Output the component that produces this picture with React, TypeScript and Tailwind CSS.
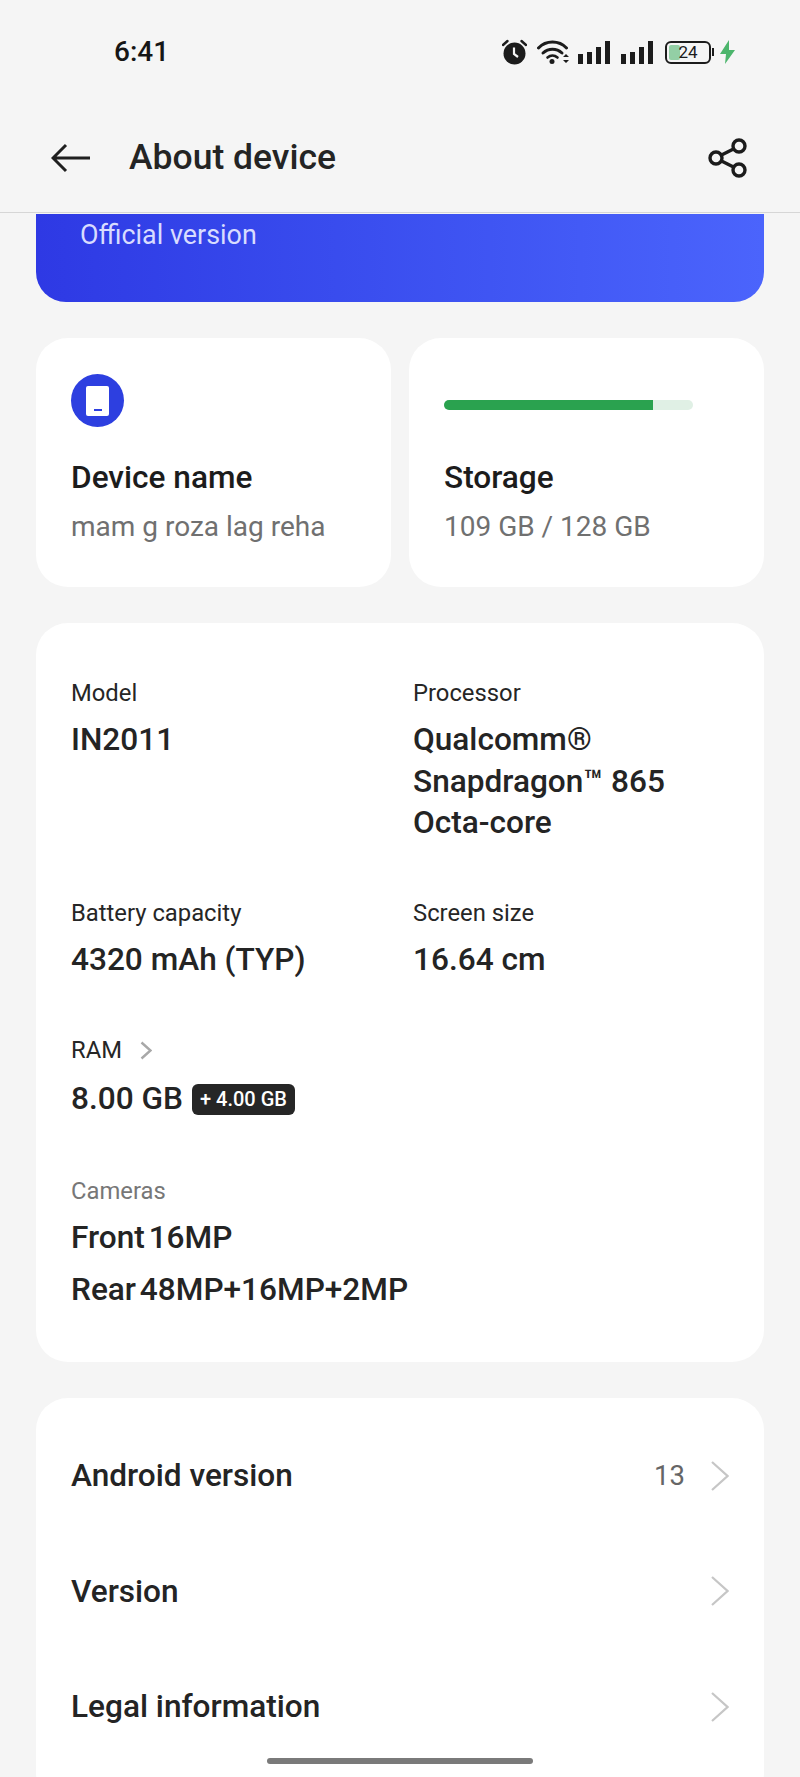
function AlarmIcon() {
  return (
    <svg width="25" height="26" viewBox="0 0 25 26" className="shrink-0">
      <circle cx="12.5" cy="14.5" r="11" fill="#1c1c1c" />
      <path d="M1 6 L5.5 2 M24 6 L19.5 2" stroke="#1c1c1c" strokeWidth="2.4" strokeLinecap="round" />
      <path d="M12 8.5 V15 L16 18" stroke="#f5f5f5" strokeWidth="2.2" fill="none" />
    </svg>
  )
}

function WifiIcon() {
  return (
    <svg width="33" height="26" viewBox="0 0 33 26" className="shrink-0">
      <path d="M1.5 9 C9 1 22 1 29.5 9" stroke="#1c1c1c" strokeWidth="3" fill="none" strokeLinecap="round" />
      <path d="M6 14 C11.5 9 19.5 9 25 14" stroke="#1c1c1c" strokeWidth="3" fill="none" strokeLinecap="round" />
      <path d="M10.5 18.5 C13.5 16 17.5 16 20.5 18.5" stroke="#1c1c1c" strokeWidth="2.6" fill="none" strokeLinecap="round" />
      <circle cx="15" cy="22.5" r="2.5" fill="#1c1c1c" />
      <path d="M26 18 L29 15 L32 18 Z M26 21 L29 24 L32 21 Z" fill="#1c1c1c" />
    </svg>
  )
}

function SignalIcon() {
  return (
    <svg width="32" height="23" viewBox="0 0 32 23" className="shrink-0">
      <rect x="0" y="13" width="5" height="10" fill="#1c1c1c" />
      <rect x="9" y="11" width="5" height="12" fill="#1c1c1c" />
      <rect x="18" y="6" width="5" height="17" fill="#1c1c1c" />
      <rect x="27" y="0" width="5" height="23" fill="#1c1c1c" />
    </svg>
  )
}

function BoltIcon() {
  return (
    <svg width="15" height="24" viewBox="0 0 15 24" className="shrink-0">
      <path d="M9 0 L0 14 H6 L5 24 L15 10 H9 Z" fill="#4cb56c" />
    </svg>
  )
}

function BackArrow() {
  return (
    <svg width="40" height="30" viewBox="0 0 40 30" className="shrink-0">
      <path d="M39 15 H2 M15 2 L2 15 L15 28" stroke="#1f1f1f" strokeWidth="3" fill="none" />
    </svg>
  )
}

function ShareIcon() {
  return (
    <svg width="40" height="40" viewBox="0 0 40 40" className="shrink-0">
      <g stroke="#1c1c1c" strokeWidth="3.4" fill="none">
        <circle cx="8" cy="20" r="6" />
        <circle cx="31" cy="8" r="6" />
        <circle cx="31" cy="32" r="6" />
        <path d="M13.5 17 L25.5 11 M13.5 23 L25.5 29" />
      </g>
    </svg>
  )
}

function Chevron({ small }: { small?: boolean }) {
  return small ? (
    <svg width="12" height="19" viewBox="0 0 12 19" className="shrink-0">
      <path d="M1.5 1.5 L10.5 9.5 L1.5 17.5" stroke="#a8a8a8" strokeWidth="2.4" fill="none" />
    </svg>
  ) : (
    <svg width="18" height="30" viewBox="0 0 18 30" className="shrink-0">
      <path d="M1 1 L16.5 15 L1 29" stroke="#c6c6c6" strokeWidth="2.2" fill="none" />
    </svg>
  )
}

function Label({ children, muted }: { children: React.ReactNode; muted?: boolean }) {
  return (
    <div className={muted ? 'text-[23.8px] leading-[30px] text-[#777777]' : 'text-[23.8px] leading-[30px] text-[#262626]'}>
      {children}
    </div>
  )
}

function Value({ children }: { children: React.ReactNode }) {
  return <div className="text-[31.6px] leading-[41.5px] font-medium text-[#242424]">{children}</div>
}

function Row({ title, value }: { title: string; value?: string }) {
  return (
    <div className="flex h-[115.5px] items-center pr-[35px] pl-[35px]">
      <span className="flex-1 text-[31.6px] font-medium text-[#242424]">{title}</span>
      {value && <span className="mr-[26px] text-[27.5px] text-[#666666]">{value}</span>}
      <Chevron />
    </div>
  )
}

export default function App() {
  return (
    <div className="relative h-[1777px] w-[800px] overflow-hidden bg-[#f5f5f5] font-['Roboto',sans-serif]">
      {/* Status bar */}
      <div className="flex h-[104px] items-center pr-[65px] pl-[114px]">
        <span className="flex-1 text-[28px] font-medium text-[#161616]">6:41</span>
        <AlarmIcon />
        <div className="ml-[10px]"><WifiIcon /></div>
        <div className="ml-2"><SignalIcon /></div>
        <div className="ml-[11px]"><SignalIcon /></div>
        <div className="ml-3 flex items-center">
          <div className="relative flex h-[23px] w-[46px] items-center justify-center rounded-[6px] border-2 border-[#1c1c1c]">
            <div className="absolute top-[2px] bottom-[2px] left-[2px] w-[11px] rounded-[2px] bg-[#93cfa5]" />
            <span className="relative text-[17px] leading-none text-[#1c1c1c]">24</span>
          </div>
          <div className="ml-[1px] h-2 w-[2px] bg-[#1c1c1c]" />
        </div>
        <div className="ml-[6px]"><BoltIcon /></div>
      </div>

      {/* Header */}
      <div className="flex h-[109px] items-center border-b border-[#d6d6d6] pr-[52px] pl-[51px]">
        <BackArrow />
        <span className="ml-[38px] flex-1 text-[35.5px] font-medium text-[#242424]">About device</span>
        <ShareIcon />
      </div>

      <div className="px-9">
        {/* Banner */}
        <div className="mt-[1px] h-[88px] rounded-b-[30px] bg-gradient-to-r from-[#2e39e4] to-[#4b64fc] pl-11">
          <div className="pt-[5px] text-[26.9px] leading-[32px] text-[#d8dcff]">Official version</div>
        </div>

        {/* Device name and storage */}
        <div className="mt-9 grid grid-cols-2 gap-[18px]">
          <div className="h-[249px] rounded-[32px] bg-white pt-9 pl-[35px]">
            <div className="flex h-[53px] w-[53px] items-center justify-center rounded-full bg-[#2d3fe0]">
              <div className="flex h-[30px] w-[23px] items-end justify-center rounded-[2px] bg-white pb-[5px]">
                <div className="h-[2px] w-[8px] bg-[#2d3fe0]" />
              </div>
            </div>
            <div className="mt-[31px] text-[31.6px] leading-[40px] font-medium text-[#1c1c1c]">Device name</div>
            <div className="mt-[11px] text-[28px] leading-[36px] text-[#707070]">mam g roza lag reha</div>
          </div>
          <div className="h-[249px] rounded-[32px] bg-white pt-[62px] pl-[35px]">
            <div className="h-[10px] w-[249px] overflow-hidden rounded-full bg-[#e0f0e5]">
              <div className="h-full w-[209px] bg-[#2aa24f]" />
            </div>
            <div className="mt-[48px] text-[31.6px] leading-[40px] font-medium text-[#1c1c1c]">Storage</div>
            <div className="mt-[11px] text-[28px] leading-[36px] text-[#707070]">109 GB / 128 GB</div>
          </div>
        </div>

        {/* Specs */}
        <div className="mt-9 h-[739px] rounded-[32px] bg-white pt-[55px] pl-[35px]">
          <div className="grid grid-cols-[342px_1fr] gap-y-[54px]">
            <div>
              <Label>Model</Label>
              <div className="mt-[11px]"><Value>IN2011</Value></div>
            </div>
            <div>
              <Label>Processor</Label>
              <div className="mt-[11px]">
                <Value>Qualcomm®</Value>
                <Value>Snapdragon™ 865</Value>
                <Value>Octa-core</Value>
              </div>
            </div>
            <div>
              <Label>Battery capacity</Label>
              <div className="mt-[11px]"><Value>4320 mAh (TYP)</Value></div>
            </div>
            <div>
              <Label>Screen size</Label>
              <div className="mt-[11px]"><Value>16.64 cm</Value></div>
            </div>
          </div>
          <div className="mt-[55px] flex items-center gap-[10px]">
            <Label>RAM</Label>
            <div className="ml-2"><Chevron small /></div>
          </div>
          <div className="mt-[13px] flex items-center">
            <Value>8.00 GB</Value>
            <span className="mt-[2px] ml-[9px] rounded-[6px] bg-[#262626] px-2 text-[20px] leading-[31px] font-medium text-white">+ 4.00 GB</span>
          </div>
          <div className="mt-[56px]"><Label muted>Cameras</Label></div>
          <div className="mt-[6px] text-[31.6px] leading-[52px] font-medium [word-spacing:-4px] text-[#242424]">
            <div>Front 16MP</div>
            <div>Rear 48MP+16MP+2MP</div>
          </div>
        </div>

        {/* Links */}
        <div className="mt-9 rounded-[32px] bg-white pt-5 pb-10">
          <Row title="Android version" value="13" />
          <Row title="Version" />
          <Row title="Legal information" />
        </div>
      </div>

      {/* Home indicator */}
      <div className="absolute bottom-[13px] left-[267px] h-[6px] w-[266px] rounded-full bg-[#7a7a7a]" />
    </div>
  )
}
